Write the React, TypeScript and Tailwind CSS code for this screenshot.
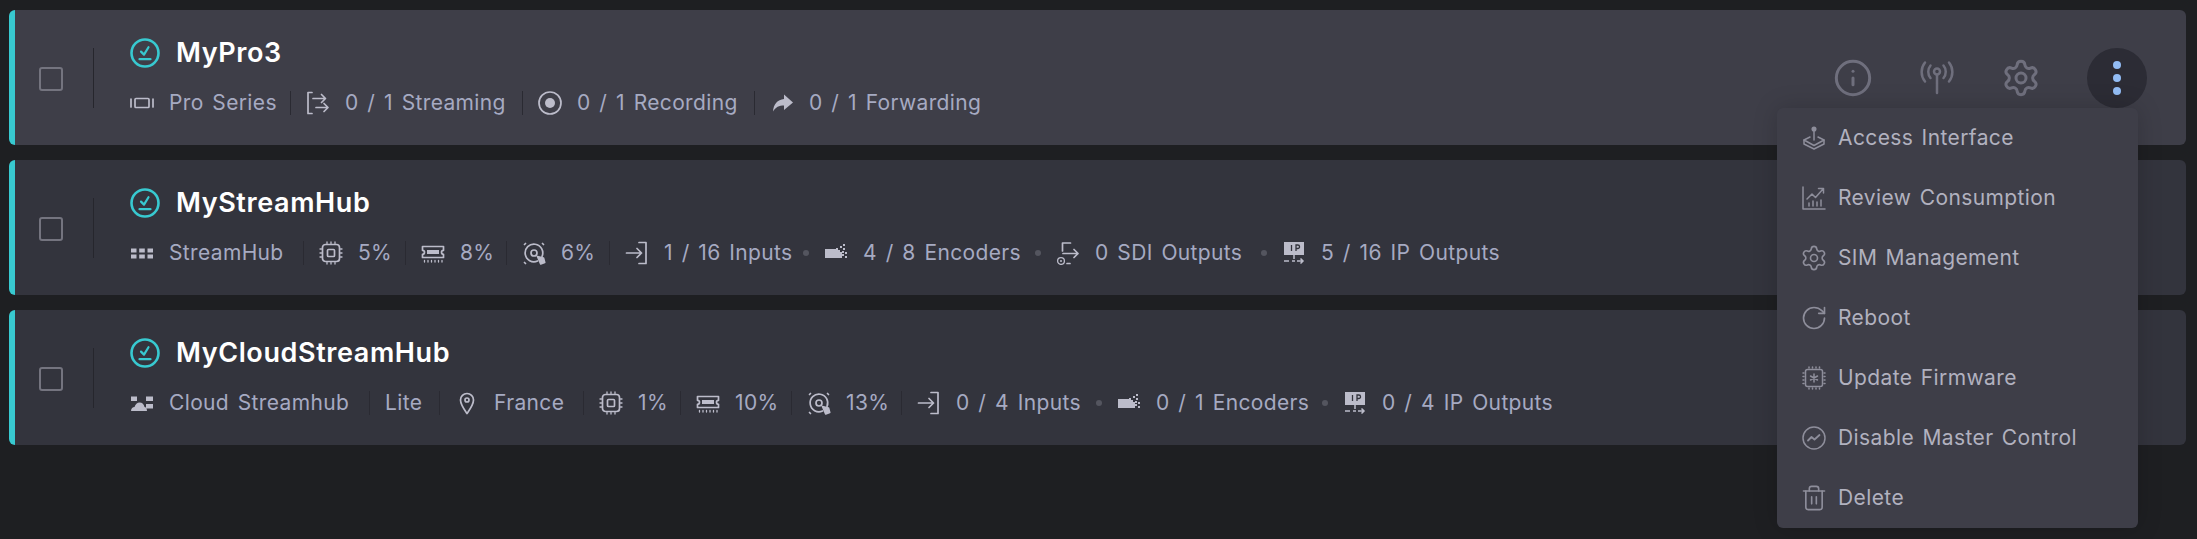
import React from "react";
import { Info, Settings, RotateCw, Trash2 } from "lucide-react";

const S = ({ children, className = "w-6 h-6" }: { children: React.ReactNode; className?: string }) => (
  <svg viewBox="0 0 24 24" fill="none" stroke="currentColor" strokeWidth="1.700" strokeLinecap="round" strokeLinejoin="round" className={`${className} shrink-0 text-[#bcbcca]`}>
    {children}
  </svg>
);

const Status = () => (
  <svg viewBox="0 0 30 30" fill="none" className="w-[30px] h-[30px] shrink-0 text-[#38c9d0]" stroke="currentColor" strokeLinecap="round" strokeLinejoin="round">
    <circle cx="15" cy="15" r="13.500" strokeWidth="2.600" />
    <path d="M11 13.600l3 3 4.500-7.400" strokeWidth="2.200" />
    <path d="M9.500 21.200h11" strokeWidth="2.200" />
  </svg>
);
const ProI = () => (
  <S>
    <path d="M1 8v8M23 8v8" />
    <rect x="5" y="7.500" width="14" height="9" rx="1" />
  </S>
);
const StreamI = () => (
  <S>
    <path d="M6 1.500H2v21h4" />
    <path d="M7 7.500h12M15.500 3.500L19.500 7.500 15.500 11.500M10 16.500h11.500M18 12.500l4 4-4 4" />
  </S>
);
const RecI = () => (
  <S>
    <circle cx="12" cy="12" r="11" />
    <circle cx="12" cy="12" r="5" fill="currentColor" stroke="none" />
  </S>
);
const FwdI = () => (
  <svg viewBox="0 0 24 24" className="w-6 h-6 shrink-0 text-[#bcbcca]" fill="currentColor">
    <path d="M14 3.500l9 8-9 7.500v-4.600c-5 0-8.300 1.500-11 6.100C3.500 13.500 7.500 8.700 14 8.100z" />
  </svg>
);
const GridI = () => (
  <svg viewBox="0 0 24 24" className="w-6 h-6 shrink-0 text-[#bcbcca]" fill="currentColor">
    <path d="M1 7.500h5.500v4H1zM9.200 7.500h5.600v4H9.200zM17.500 7.500H23v4h-5.500zM1 13.500h5.500v4H1zM9.200 13.500h5.600v4H9.200zM17.500 13.500H23v4h-5.500z" />
  </svg>
);
const CloudI = () => (
  <svg viewBox="0 0 24 24" className="w-6 h-6 shrink-0 text-[#bcbcca]" fill="currentColor">
    <path d="M1 5.500h6v4.500H1zM16 5.500h7v4.500h-7zM16 13h7v4.500h-7zM1 20c0-2.500 1.800-4 3.500-4 .8-2.600 2.700-4.500 5-4.500 2.800 0 4.500 2 5 4.500 1.500.2 2.500 1.600 2.500 4z" />
  </svg>
);
const CpuI = () => (
  <S>
    <rect x="3.500" y="3.500" width="17" height="17" rx="3" />
    <rect x="8.500" y="8.500" width="7" height="7" rx="1" />
    <path d="M8 1v1.500M12 1v1.500M16 1v1.500M8 21.500V23M12 21.500V23M16 21.500V23M1 8h1.500M1 12h1.500M1 16h1.500M21.500 8H23M21.500 12H23M21.500 16H23" strokeWidth="1.300" />
  </S>
);
const RamI = () => (
  <S>
    <path d="M1.500 5.500h21v3.800a2 2 0 000 4V16.500h-21v-3.200a2 2 0 000-4z" />
    <path d="M6 9h12v4H6z" fill="currentColor" stroke="none" />
    <path d="M3.500 19.500v1.500M7 19.500v1.500M10.500 19.500v1.500M14 19.500v1.500M17.500 19.500v1.500M21 19.500v1.500" strokeWidth="1.300" />
  </S>
);
const DiskI = () => (
  <S>
    <path d="M2.500 3.500l1-1M21.500 3.500l-1-1M2.500 21.500l1 1" />
    <path d="M15.500 20A8.800 8.800 0 1120 15.500" />
    <circle cx="12" cy="12" r="3" />
    <path d="M15.500 15.500l6 1.500 1.200 4.500-4 1.500z" fill="currentColor" />
  </S>
);
const InI = () => (
  <S>
    <path d="M14 1.500h7v21h-7" />
    <path d="M1.500 12h15M12 7.500l4.500 4.500-4.500 4.500" />
  </S>
);
const EncI = () => (
  <svg viewBox="0 0 24 24" className="w-6 h-6 shrink-0 text-[#bcbcca]" fill="currentColor">
    <path d="M1 8h11V7h2v2h2v2h2v2h2v2h-2v2H1z" />
    <path d="M16 5h2v2h-2zM19 7h2v2h-2zM18 10h2v2h-2zM21 11h2v2h-2zM21 15h2v2h-2zM19 3h2v2h-2z" />
  </svg>
);
const SdiI = () => (
  <S>
    <path d="M6.500 10V2h8" />
    <path d="M7 12.500h15M18 8.500l4 4-4 4" />
    <circle cx="5" cy="20" r="3.400" strokeWidth="1.300" />
    <circle cx="5" cy="20" r="1" fill="currentColor" stroke="none" />
    <path d="M11 22.500h3" />
  </S>
);
const IpI = () => (
  <svg viewBox="0 0 24 24" className="w-6 h-6 shrink-0 text-[#bcbcca]">
    <rect x="2" y="1" width="20" height="13" fill="currentColor" />
    <path d="M9.500 4v6M14 10V4h1.800a1.500 1.500 0 010 3.500H14" stroke="#33343d" strokeWidth="1.300" fill="none" />
    <path d="M12 14v4M2 20h5M10 20h3M15 20h6M18.500 17.500L21 20l-2.500 2.500" stroke="currentColor" strokeWidth="1.500" fill="none" />
  </svg>
);
const PinI = () => (
  <S>
    <path d="M12 22.500c-3.500-5-6.500-9-6.500-13.500a6.500 6.500 0 0113 0c0 4.500-3 8.500-6.500 13.500z" />
    <circle cx="12" cy="9" r="2" />
  </S>
);

const AntennaI = () => (
  <svg viewBox="0 0 36 36" fill="none" stroke="currentColor" strokeWidth="2.500" strokeLinecap="round" className="w-9 h-9 text-[#6f6f7d]">
    <circle cx="18" cy="11.500" r="3" />
    <path d="M18 15v18M11.500 5.500c-3 3.500-3 9 0 12.500M24.500 5.500c3 3.500 3 9 0 12.500M6 2.500c-4.500 5.500-4.500 13.500 0 19M30 2.500c4.500 5.500 4.500 13.500 0 19" />
  </svg>
);

const MenuS = ({ children }: { children: React.ReactNode }) => (
  <svg viewBox="0 0 24 24" fill="none" stroke="currentColor" strokeWidth="1.500" strokeLinecap="round" strokeLinejoin="round" className="w-6 h-6 shrink-0 text-[#8e8e9b]">
    {children}
  </svg>
);
const lucideMenu = "-mx-0.5 h-7 w-7 shrink-0 text-[#8e8e9b]";
const JoyI = () => (
  <MenuS>
    <circle cx="12" cy="3" r="1.800" fill="currentColor" />
    <path d="M12 5v9" />
    <path d="M8 11l-6 3 10 5.500L22 14l-6-3" />
    <path d="M2 14v4l10 5 10-5v-4" />
  </MenuS>
);
const ChartI = () => (
  <MenuS>
    <path d="M1 1v22h22" />
    <path d="M5 13l5-5 3.500 3.500L21 3M16.500 2.500H21.500V7" />
    <path d="M7 20v-3M11 20v-5M15 20v-4M19 20v-6" />
  </MenuS>
);
const FirmI = () => (
  <MenuS>
    <rect x="3.500" y="3.500" width="17" height="17" rx="2" />
    <path d="M12 8v8M8.500 10l7 4M15.500 10l-7 4" />
    <path d="M7 1v1M10.500 1v1M14 1v1M17.500 1v1M7 22v1M10.500 22v1M14 22v1M17.500 22v1M1 7h1M1 10.500h1M1 14h1M1 17.500h1M22 7h1M22 10.500h1M22 14h1M22 17.500h1" />
  </MenuS>
);
const ActI = () => (
  <MenuS>
    <circle cx="12" cy="12" r="11" />
    <path d="M6 14.500l3.500-3.500 3 2.500L17.500 9" strokeWidth="1.800" />
  </MenuS>
);

type Item =
  | { kind: "sep" }
  | { kind: "dot" }
  | { kind: "text"; icon?: React.ReactNode; text: string; w: string };

const sep: Item = { kind: "sep" };
const dot: Item = { kind: "dot" };
const t = (icon: React.ReactNode, text: string, w: string): Item => ({ kind: "text", icon, text, w });

const rows: { name: string; bg: string; items: Item[] }[] = [
  {
    name: "MyPro3",
    bg: "bg-[#3e3e48]",
    items: [
      t(<ProI />, "Pro Series", "w-[106px]"), sep,
      t(<StreamI />, "0 / 1 Streaming", "w-[162px]"), sep,
      t(<RecI />, "0 / 1 Recording", "w-[162px]"), sep,
      t(<FwdI />, "0 / 1 Forwarding", "w-[173px]"),
    ],
  },
  {
    name: "MyStreamHub",
    bg: "bg-[#33343d]",
    items: [
      t(<GridI />, "StreamHub", "w-[119px]"), sep,
      t(<CpuI />, "5%", "w-[32px]"), sep,
      t(<RamI />, "8%", "w-[31px]"), sep,
      t(<DiskI />, "6%", "w-[33px]"), sep,
      t(<InI />, "1 / 16 Inputs", "w-[124px]"), dot,
      t(<EncI />, "4 / 8 Encoders", "w-[157px]"), dot,
      t(<SdiI />, "0 SDI Outputs", "w-[151px]"), dot,
      t(<IpI />, "5 / 16 IP Outputs", "w-[175px]"),
    ],
  },
  {
    name: "MyCloudStreamHub",
    bg: "bg-[#33343d]",
    items: [
      t(<CloudI />, "Cloud Streamhub", "w-[185px]"), sep,
      t(null, "Lite", "w-[39px]"), sep,
      t(<PinI />, "France", "w-[74px]"), sep,
      t(<CpuI />, "1%", "w-[27px]"), sep,
      t(<RamI />, "10%", "w-[41px]"), sep,
      t(<DiskI />, "13%", "w-[40px]"), sep,
      t(<InI />, "0 / 4 Inputs", "w-[125px]"), dot,
      t(<EncI />, "0 / 1 Encoders", "w-[151px]"), dot,
      t(<IpI />, "0 / 4 IP Outputs", "w-[172px]"),
    ],
  },
];

const menu: { icon: React.ReactNode; label: string }[] = [
  { icon: <JoyI />, label: "Access Interface" },
  { icon: <ChartI />, label: "Review Consumption" },
  { icon: <Settings className={lucideMenu} strokeWidth={1.4} />, label: "SIM Management" },
  { icon: <RotateCw className={lucideMenu} strokeWidth={1.4} />, label: "Reboot" },
  { icon: <FirmI />, label: "Update Firmware" },
  { icon: <ActI />, label: "Disable Master Control" },
  { icon: <Trash2 className={lucideMenu} strokeWidth={1.4} />, label: "Delete" },
];

function Row({ row, first }: { row: (typeof rows)[number]; first: boolean }) {
  return (
    <div className={`relative flex h-[135px] items-center rounded-md border-l-[6px] border-[#38c9d0] ${row.bg}`}>
      <div className="mt-[3px] ml-6 h-6 w-6 shrink-0 rounded-[3px] border-2 border-[#74747f]" />
      <div className="ml-[30px] h-[60px] w-px shrink-0 bg-[#26262d]" />
      <div className="ml-9 flex flex-col gap-[23px] pb-[2px]">
        <div className="flex items-center gap-4">
          <Status />
          <span className="text-[27px] leading-[30px] font-semibold tracking-[0.6px] text-white">{row.name}</span>
        </div>
        <div className="flex h-6 items-center gap-[15px]">
          {row.items.map((it, i) => {
            if (it.kind === "sep") return <div key={i} className="h-6 w-px shrink-0 bg-[#2a2a32]" />;
            if (it.kind === "dot") return <div key={i} className="h-[6px] w-[6px] shrink-0 rounded-full bg-[#54555f]" />;
            return (
              <div key={i} className="flex items-center gap-[15px]">
                {it.icon}
                <span className={`${it.w} text-[21px] leading-6 tracking-[0.35px] [word-spacing:2.5px] whitespace-nowrap text-[#a6aac2]`}>{it.text}</span>
              </div>
            );
          })}
        </div>
      </div>
      {first && (
        <div className="absolute top-[38px] right-[39px] flex items-center gap-12">
          <Info className="-m-0.5 h-10 w-10 text-[#6f6f7d]" strokeWidth={1.8} />
          <AntennaI />
          <Settings className="-m-0.5 h-10 w-10 text-[#6f6f7d]" strokeWidth={1.8} />
          <div className="flex h-[60px] w-[60px] flex-col items-center justify-center gap-[5px] rounded-full bg-[#2c2c35]">
            <span className="h-2 w-2 rounded-full bg-[#93bdf5]" />
            <span className="h-2 w-2 rounded-full bg-[#93bdf5]" />
            <span className="h-2 w-2 rounded-full bg-[#93bdf5]" />
          </div>
        </div>
      )}
    </div>
  );
}

export default function App() {
  return (
    <div className="relative min-h-[539px] overflow-hidden bg-[#1e1f22] pt-[10px] pr-[11px] pl-[9px] font-['Inter',sans-serif]">
      <div className="flex flex-col gap-[15px]">
        {rows.map((r, i) => (
          <Row key={r.name} row={r} first={i === 0} />
        ))}
      </div>
      <div className="absolute top-[108px] left-[1777px] w-[361px] rounded-md bg-[#3e3e48] shadow-[0_0_24px_rgba(0,0,0,0.18)]">
        {menu.map((m) => (
          <div key={m.label} className="flex h-[60px] items-center gap-3 pl-[25px]">
            {m.icon}
            <span className="text-[21px] tracking-[0.4px] [word-spacing:2px] whitespace-nowrap text-[#b1b1bf]">{m.label}</span>
          </div>
        ))}
      </div>
    </div>
  );
}
